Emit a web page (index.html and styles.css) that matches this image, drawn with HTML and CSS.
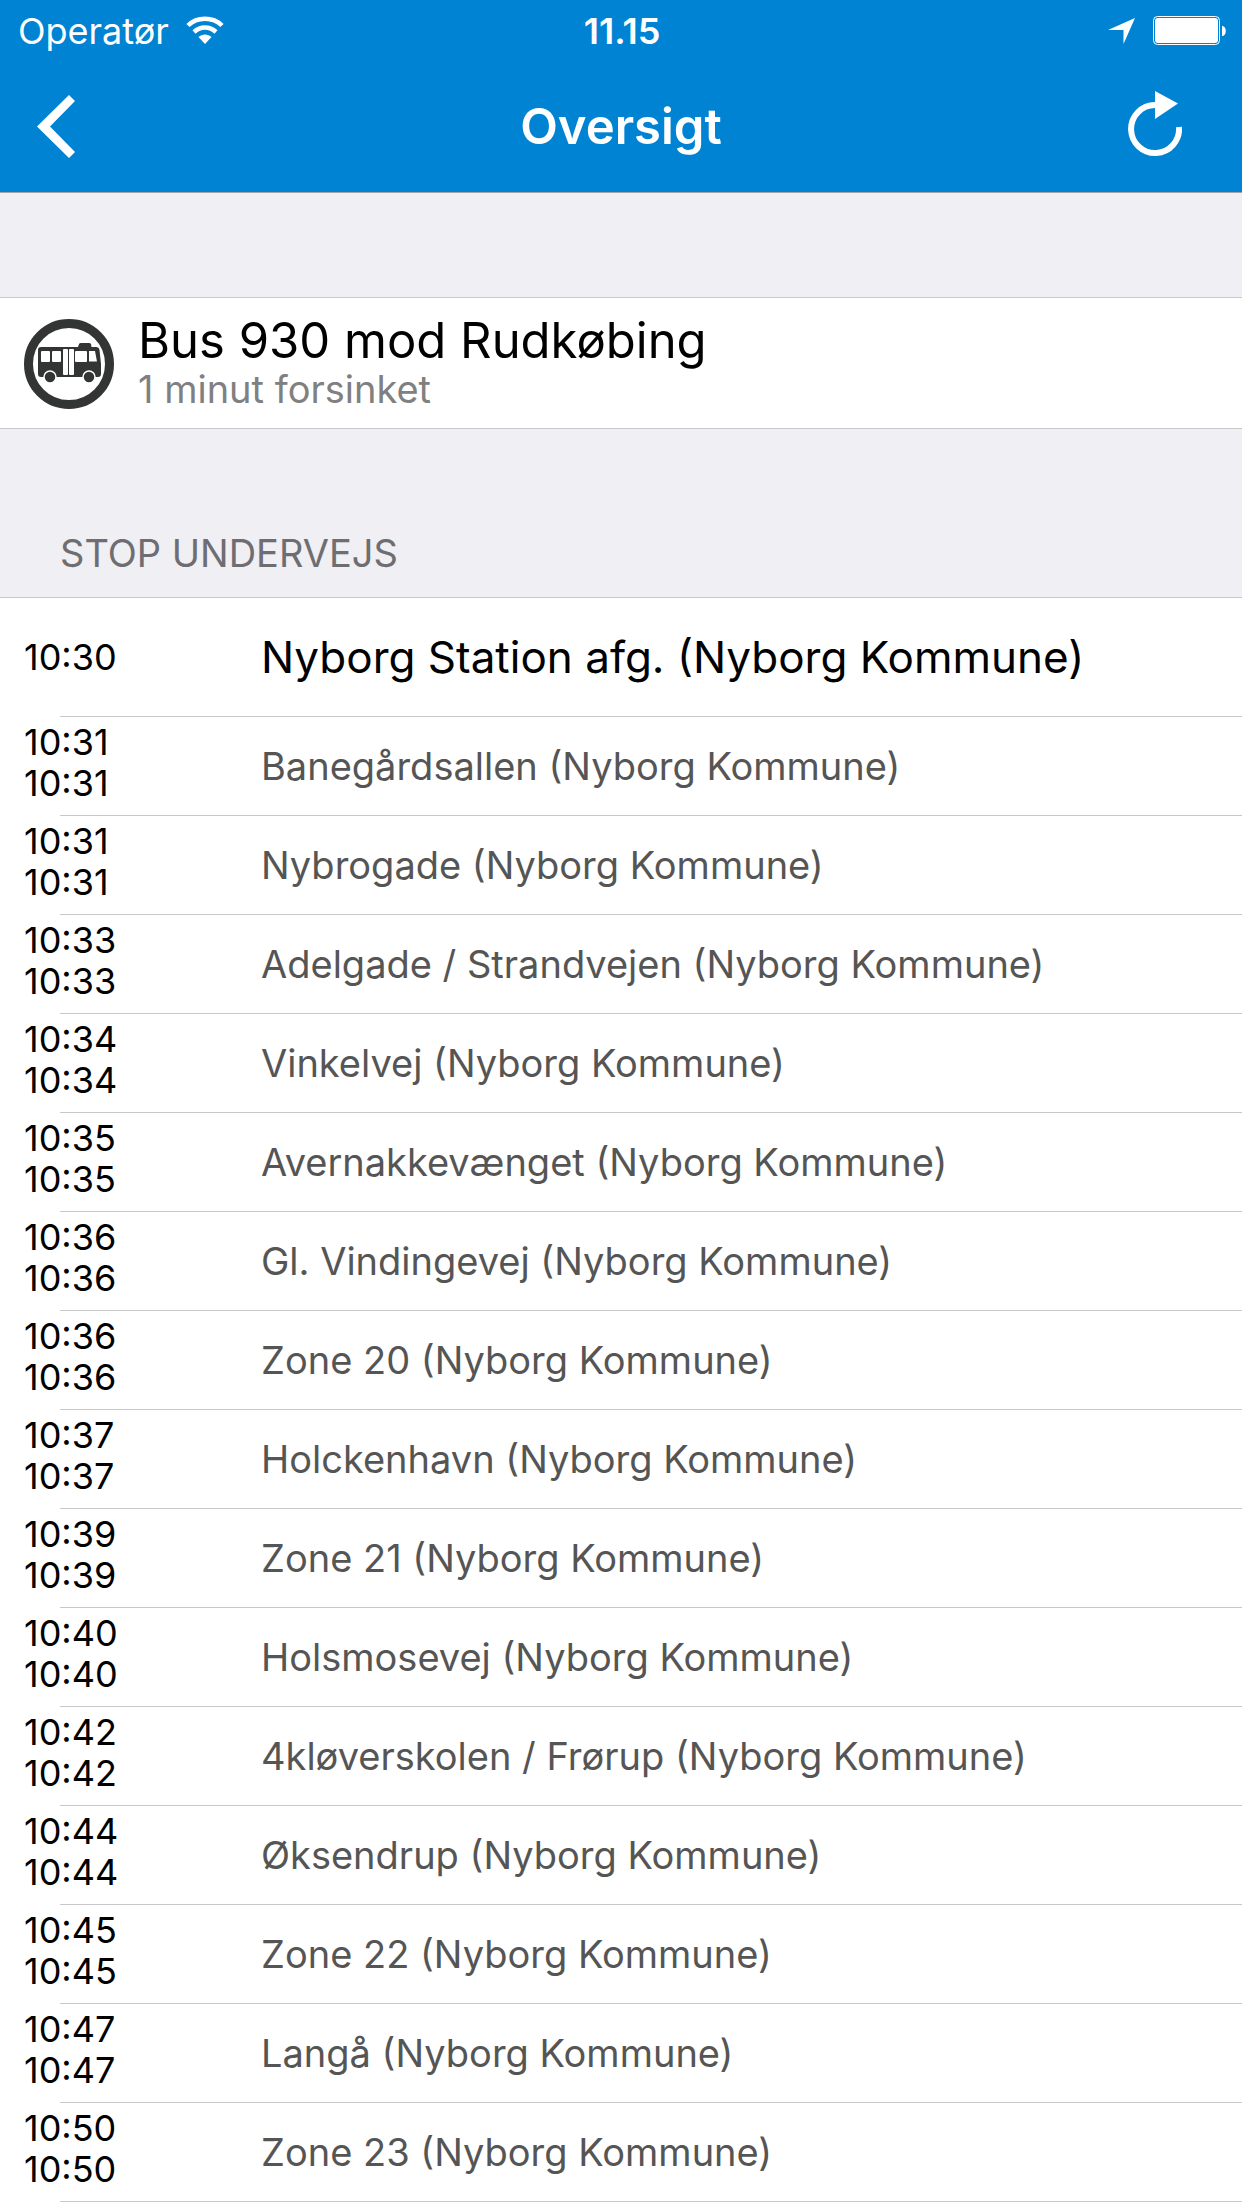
FILE: index.html
```html
<!DOCTYPE html>
<html lang="da">
<head>
    <meta charset="UTF-8">
    <meta name="viewport" content="width=device-width, initial-scale=1.0">
    <title>Oversigt</title>
    <link rel="stylesheet" href="styles.css">
</head>
<body>
    <header class="top">
        <div class="status-bar">
            <div class="status-left">
                <span>Operatør</span>
                <svg class="wifi" width="38" height="30" viewBox="0 0 38 30" fill="none" stroke="#fff" stroke-width="4.500">
                    <path d="M2 9.500C11 0.500 27 0.500 36 9.500"/>
                    <path d="M8 16C14.500 10 23.500 10 30 16"/>
                    <path d="M12.500 21C16 17.500 22 17.500 25.500 21L19 28Z" fill="#fff" stroke="none"/>
                </svg>
            </div>
            <span class="clock">11.15</span>
            <div class="status-right">
                <svg width="28" height="28" viewBox="0 0 28 28">
                    <path d="M0 13L27 1L15.500 27V13Z" fill="#fff"/>
                </svg>
                <svg width="73" height="30" viewBox="0 0 73 30">
                    <rect x="0.500" y="0.500" width="66" height="28" rx="4" fill="none" stroke="#fff"/>
                    <rect x="2" y="2" width="63" height="25" rx="3" fill="#fff"/>
                    <path d="M69 10C74 10 74 20 69 20Z" fill="#fff"/>
                </svg>
            </div>
        </div>
        <nav class="nav-bar">
            <button type="button" class="nav-button" aria-label="Tilbage">
                <svg width="40" height="64" viewBox="0 0 40 64">
                    <path d="M33 0L39 6L14 31.500L39 57L33 63L1 31.500Z" fill="#fff"/>
                </svg>
            </button>
            <h1>Oversigt</h1>
            <button type="button" class="nav-button refresh" aria-label="Opdater">
                <svg width="54" height="72" viewBox="0 0 54 72">
                    <path d="M27 14A24 24 0 1 0 51 36" fill="none" stroke="#fff" stroke-width="6"/>
                    <path d="M27 0L50 12.500L27 28Z" fill="#fff"/>
                </svg>
            </button>
        </nav>
    </header>

    <main>
        <section class="route">
            <svg class="bus-icon" width="90" height="90" viewBox="0 0 90 90">
                <circle cx="45" cy="45" r="40.500" fill="#fff" stroke="#333534" stroke-width="9"/>
                <path d="M54 28L55 25Q55.500 24 57 24H65Q66.500 24 67 25L67.500 28H72Q75 28 75.500 31L77 45V55Q77 58 74 58H17Q14 58 14 55V31Q14 28 17 28Z" fill="#333534"/>
                <g fill="#fff">
                    <rect x="17" y="32" width="9" height="11" rx="1"/>
                    <rect x="28" y="32" width="9" height="11" rx="1"/>
                    <rect x="39" y="30" width="5" height="26" rx="1"/>
                    <rect x="45" y="30" width="5" height="26" rx="1"/>
                    <rect x="51" y="32" width="12" height="11" rx="1"/>
                    <path d="M65 32H71L73 42.500H65Z"/>
                </g>
                <g fill="#333534" stroke="#fff" stroke-width="1.500">
                    <circle cx="26" cy="58" r="6"/>
                    <circle cx="65" cy="58" r="6"/>
                </g>
            </svg>
            <div class="route-text">
                <h2 class="route-name">Bus 930 mod Rudkøbing</h2>
                <p class="route-delay">1 minut forsinket</p>
            </div>
        </section>

        <h2 class="list-title">STOP UNDERVEJS</h2>
        <ul class="stops">
            <li class="first">
                <div class="times"><time>10:30</time></div>
                <span class="name">Nyborg Station afg. (Nyborg Kommune)</span>
            </li>
            <li>
                <div class="times"><time>10:31</time><time>10:31</time></div>
                <span class="name">Banegårdsallen (Nyborg Kommune)</span>
            </li>
            <li>
                <div class="times"><time>10:31</time><time>10:31</time></div>
                <span class="name">Nybrogade (Nyborg Kommune)</span>
            </li>
            <li>
                <div class="times"><time>10:33</time><time>10:33</time></div>
                <span class="name">Adelgade / Strandvejen (Nyborg Kommune)</span>
            </li>
            <li>
                <div class="times"><time>10:34</time><time>10:34</time></div>
                <span class="name">Vinkelvej (Nyborg Kommune)</span>
            </li>
            <li>
                <div class="times"><time>10:35</time><time>10:35</time></div>
                <span class="name">Avernakkevænget (Nyborg Kommune)</span>
            </li>
            <li>
                <div class="times"><time>10:36</time><time>10:36</time></div>
                <span class="name">Gl. Vindingevej (Nyborg Kommune)</span>
            </li>
            <li>
                <div class="times"><time>10:36</time><time>10:36</time></div>
                <span class="name">Zone 20 (Nyborg Kommune)</span>
            </li>
            <li>
                <div class="times"><time>10:37</time><time>10:37</time></div>
                <span class="name">Holckenhavn (Nyborg Kommune)</span>
            </li>
            <li>
                <div class="times"><time>10:39</time><time>10:39</time></div>
                <span class="name">Zone 21 (Nyborg Kommune)</span>
            </li>
            <li>
                <div class="times"><time>10:40</time><time>10:40</time></div>
                <span class="name">Holsmosevej (Nyborg Kommune)</span>
            </li>
            <li>
                <div class="times"><time>10:42</time><time>10:42</time></div>
                <span class="name">4kløverskolen / Frørup (Nyborg Kommune)</span>
            </li>
            <li>
                <div class="times"><time>10:44</time><time>10:44</time></div>
                <span class="name">Øksendrup (Nyborg Kommune)</span>
            </li>
            <li>
                <div class="times"><time>10:45</time><time>10:45</time></div>
                <span class="name">Zone 22 (Nyborg Kommune)</span>
            </li>
            <li>
                <div class="times"><time>10:47</time><time>10:47</time></div>
                <span class="name">Langå (Nyborg Kommune)</span>
            </li>
            <li>
                <div class="times"><time>10:50</time><time>10:50</time></div>
                <span class="name">Zone 23 (Nyborg Kommune)</span>
            </li>
        </ul>
    </main>
</body>
</html>
```

FILE: styles.css
```css
* {
    box-sizing: border-box;
}

body {
    font-family: Inter, "Liberation Sans", sans-serif;
    margin: 0;
    background-color: #fff;
    color: #000;
}

h1, h2, p, ul {
    margin: 0;
    padding: 0;
    font-weight: 400;
}

svg {
    display: block;
    flex-shrink: 0;
}

.top {
    background-color: #0083d3;
    color: #fff;
    border-bottom: 1px solid #a3a3ab;
}

/* status bar and navigation share the same three columns */
.status-bar,
.nav-bar {
    display: grid;
    grid-template-columns: 1fr auto 1fr;
    align-items: center;
}

.status-bar {
    height: 62px;
    padding: 0 16px 0 18px;
    font-size: 36px;
    line-height: 62px;
}

.status-left,
.status-right {
    display: flex;
    align-items: center;
    gap: 17px;
}

.status-right {
    justify-content: flex-end;
}

.clock {
    font-weight: 600;
}

.nav-bar {
    height: 130px;
    padding: 0 36px;
}

.nav-bar h1 {
    font-size: 49px;
    line-height: 60px;
    font-weight: 600;
}

.nav-button {
    display: flex;
    padding: 0;
    border: none;
    background: none;
    cursor: pointer;
}

.refresh {
    justify-self: end;
    padding-right: 24px;
}

main {
    background-color: #efeff4;
    padding-top: 104px;
}

/* bus and delay */
.route {
    display: flex;
    align-items: center;
    gap: 24px;
    min-height: 132px;
    padding: 2px 24px 0;
    background-color: #fff;
    border-top: 1px solid #c8c7cc;
    border-bottom: 1px solid #c8c7cc;
}

.route-text {
    padding-bottom: 6px;
}

.route-name {
    font-size: 49px;
    line-height: 56px;
}

.route-delay {
    font-size: 38px;
    line-height: 40px;
    color: #808080;
}

.list-title {
    padding: 100px 60px 20px;
    font-size: 38px;
    line-height: 48px;
    color: #6d6d72;
}

/* stops */
.stops {
    list-style: none;
    background-color: #fff;
    border-top: 1px solid #c8c7cc;
}

.stops li {
    display: flex;
    align-items: center;
    min-height: 99px;
    margin-left: 60px;
    border-bottom: 1px solid #c8c7cc;
}

.stops .first {
    min-height: 119px;
}

.times {
    flex: 0 0 237px;
    margin-left: -36px;
    padding-bottom: 6px;
    font-size: 36px;
    line-height: 41px;
}

.times time {
    display: block;
}

.first .times {
    padding-bottom: 0;
}

.name {
    font-size: 38px;
    line-height: 48px;
    color: #555;
}

.first .name {
    font-size: 44px;
    color: #000;
}
```
